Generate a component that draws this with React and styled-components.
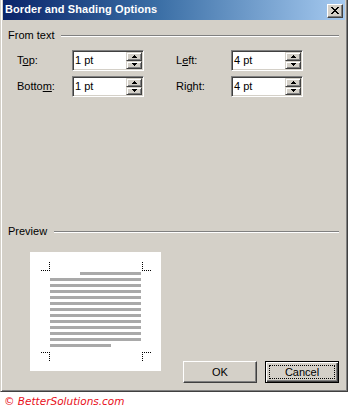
import React from 'react'
import styled, { createGlobalStyle } from 'styled-components'

const GlobalStyle = createGlobalStyle`
    body {
        margin: 0;
        background: #ffffff;
        font-family: 'Liberation Sans', Arial, sans-serif;
    }
`

const fields = [
    { label: 'Top:', key: 'o', value: '1 pt' },
    { label: 'Left:', key: 'e', value: '4 pt' },
    { label: 'Bottom:', key: 'm', value: '1 pt' },
    { label: 'Right:', key: 'g', value: '4 pt' },
]

function Label({ text, accessKey }) {
    var i = text.indexOf(accessKey)
    if (accessKey === 'm') i = text.lastIndexOf('m')
    return (
        <FieldLabel>
            {text.slice(0, i)}
            <AccessKey>{text[i]}</AccessKey>
            {text.slice(i + 1)}
        </FieldLabel>
    )
}

function Spinner({ value }) {
    return (
        <SpinBox>
            <SpinValue>{value}</SpinValue>
            <SpinButtons>
                <SpinButton>
                    <svg width="5" height="3" viewBox="0 0 5 3" shapeRendering="crispEdges">
                        <polygon points="2.5,0 5,3 0,3" fill="#000" />
                    </svg>
                </SpinButton>
                <SpinButton>
                    <svg width="5" height="3" viewBox="0 0 5 3" shapeRendering="crispEdges">
                        <polygon points="0,0 5,0 2.5,3" fill="#000" />
                    </svg>
                </SpinButton>
            </SpinButtons>
        </SpinBox>
    )
}

function PreviewDrawing() {
    var lines = []
    for (var k = 0; k < 11; k++) {
        lines.push(<rect key={k} x="20" y={26 + k * 6} width="91" height="3" fill="#a9a9a9" />)
    }
    var dot = { stroke: '#000', strokeWidth: 1, strokeDasharray: '1 1', fill: 'none' }
    return (
        <svg width="131" height="119" viewBox="0 0 131 119" shapeRendering="crispEdges">
            <path d="M11 18.5H19.5V10" {...dot} />
            <path d="M112.5 10V18.5H121" {...dot} />
            <path d="M11 100.5H19.5V109" {...dot} />
            <path d="M112.5 109V100.5H121" {...dot} />
            <rect x="50" y="20" width="61" height="3" fill="#a9a9a9" />
            {lines}
            <rect x="20" y="92" width="61" height="3" fill="#a9a9a9" />
        </svg>
    )
}

export default function App() {
    return (
        <>
            <GlobalStyle />
            <Window>
                <TitleBar>
                    <Title>Border and Shading Options</Title>
                    <CloseButton>
                        <svg width="8" height="7" viewBox="0 0 8 7" shapeRendering="crispEdges">
                            <path d="M0 0h2v1h-2zM6 0h2v1h-2zM1 1h2v1h-2zM5 1h2v1h-2zM2 2h4v1h-4zM3 3h2v1h-2zM2 4h4v1h-4zM1 5h2v1h-2zM5 5h2v1h-2zM0 6h2v1h-2zM6 6h2v1h-2z" fill="#000" />
                        </svg>
                    </CloseButton>
                </TitleBar>
                <Body>
                    <GroupHeader>
                        <span>From text</span>
                        <Rule />
                    </GroupHeader>
                    <FieldGrid>
                        {fields.map((f) => (
                            <React.Fragment key={f.label}>
                                <Label text={f.label} accessKey={f.key} />
                                <Spinner value={f.value} />
                            </React.Fragment>
                        ))}
                    </FieldGrid>
                    <GroupHeader $top={128}>
                        <span>Preview</span>
                        <Rule />
                    </GroupHeader>
                    <BottomRow>
                        <PreviewBox>
                            <PreviewDrawing />
                        </PreviewBox>
                        <Buttons>
                            <Button>OK</Button>
                            <Button $default>
                                <FocusRing>Cancel</FocusRing>
                            </Button>
                        </Buttons>
                    </BottomRow>
                </Body>
            </Window>
            <Footer>© BetterSolutions.com</Footer>
        </>
    )
}

const Window = styled.div`
    width: 348px;
    height: 392px;
    box-sizing: border-box;
    display: flex;
    flex-direction: column;
    background-color: #d4d0c8;
    border: 1px solid;
    border-top: none;
    border-color: #d4d0c8 #404040 #404040 #d4d0c8;
    box-shadow: inset 1px 0 #ffffff, inset -1px -1px #808080;
    padding: 0 2px 2px 2px;
`
const TitleBar = styled.div`
    height: 20px;
    flex: none;
    display: flex;
    align-items: center;
    justify-content: space-between;
    padding: 0 2px 0 2px;
    background: linear-gradient(to right, #0a246a 0%, #3a6ea5 45%, #a6caf0 100%);
`
const Title = styled.div`
    color: #ffffff;
    font-size: 11px;
    font-weight: bold;
    line-height: 13px;
    letter-spacing: 0.1px;
    margin-top: -2px;
`
const CloseButton = styled.div`
    width: 16px;
    height: 14px;
    box-sizing: border-box;
    display: flex;
    align-items: center;
    justify-content: center;
    background-color: #d4d0c8;
    border: 1px solid;
    border-color: #ffffff #404040 #404040 #ffffff;
    box-shadow: inset -1px -1px #808080;
    margin-top: 1px;
`
const Body = styled.div`
    flex: 1;
    display: flex;
    flex-direction: column;
    padding: 0 6px 0 5px;
    font-size: 11px;
    line-height: 13px;
    color: #000000;
`
const GroupHeader = styled.div`
    display: flex;
    align-items: center;
    gap: 7px;
    margin-top: ${(p) => (p.$top ? p.$top : 9)}px;
`
const Rule = styled.div`
    flex: 1;
    height: 1px;
    background-color: #808080;
    border-bottom: 1px solid #ffffff;
    margin-top: 1px;
`
const FieldGrid = styled.div`
    display: grid;
    grid-template-columns: 55px 72px 32px 55px 72px;
    grid-auto-rows: 21px;
    row-gap: 5px;
    align-items: center;
    margin: 8px 0 0 9px;
    & > :nth-child(4n + 3) {
        grid-column: 4;
    }
`
const FieldLabel = styled.div`
    white-space: nowrap;
`
const AccessKey = styled.span`
    text-decoration: underline;
`
const SpinBox = styled.div`
    height: 21px;
    box-sizing: border-box;
    display: flex;
    align-items: stretch;
    background-color: #ffffff;
    border: 1px solid;
    border-color: #808080 #ffffff #ffffff #808080;
    box-shadow: inset 1px 1px #404040, inset -1px -1px #d4d0c8;
    padding: 1px;
`
const SpinValue = styled.div`
    flex: 1;
    padding-left: 1px;
    display: flex;
    align-items: center;
`
const SpinButtons = styled.div`
    width: 16px;
    display: flex;
    flex-direction: column;
`
const SpinButton = styled.div`
    flex: 1;
    box-sizing: border-box;
    display: flex;
    align-items: center;
    justify-content: center;
    background-color: #d4d0c8;
    border: 1px solid;
    border-color: #d4d0c8 #404040 #404040 #d4d0c8;
    box-shadow: inset 1px 1px #ffffff, inset -1px -1px #808080;
`
const BottomRow = styled.div`
    display: flex;
    justify-content: space-between;
    margin-top: 14px;
`
const PreviewBox = styled.div`
    width: 131px;
    height: 119px;
    background-color: #ffffff;
    margin: 0 0 12px 22px;
    svg {
        display: block;
    }
`
const Buttons = styled.div`
    align-self: flex-end;
    display: flex;
    gap: 8px;
`
const Button = styled.div`
    width: 74px;
    height: 22px;
    box-sizing: border-box;
    display: flex;
    align-items: center;
    justify-content: center;
    background-color: #d4d0c8;
    border: 1px solid;
    border-color: ${(p) => (p.$default ? '#000000' : '#ffffff #404040 #404040 #ffffff')};
    box-shadow: ${(p) =>
        p.$default
            ? 'inset 1px 1px #ffffff, inset -1px -1px #404040, inset -2px -2px #808080'
            : 'inset -1px -1px #808080'};
    font-size: 11px;
`
const FocusRing = styled.div`
    align-self: stretch;
    flex: 1;
    margin: 3px;
    display: flex;
    align-items: center;
    justify-content: center;
    border: 1px dotted #000000;
`
const Footer = styled.div`
    margin: 3px 0 0 4px;
    font-family: 'DejaVu Sans', Verdana, sans-serif;
    font-style: italic;
    font-size: 10.5px;
    line-height: 12px;
    color: #e8101a;
`
